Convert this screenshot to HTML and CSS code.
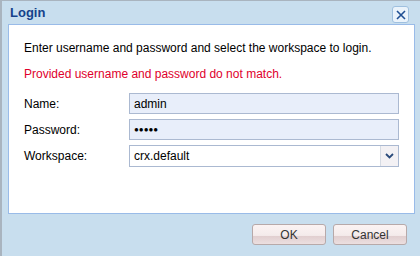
FILE: index.html
```html
<!DOCTYPE html>
<html>
<head>
<meta charset="utf-8">
<link rel="stylesheet" href="styles.css">
</head>
<body>
<div class="window">
  <div class="header">
    <span class="title">Login</span>
    <span class="close">
      <svg width="12" height="12" viewBox="0 0 12 12"><path d="M2 2 L10 10 M10 2 L2 10" stroke="#1f4f94" stroke-width="1.6" fill="none"/></svg>
    </span>
  </div>
  <div class="panel">
    <p class="intro">Enter username and password and select the workspace to login.</p>
    <p class="error">Provided username and password do not match.</p>
    <div class="form">
      <label class="lbl">Name:</label>
      <div class="field">admin</div>
      <label class="lbl">Password:</label>
      <div class="field pw">●●●●●</div>
      <label class="lbl">Workspace:</label>
      <div class="select"><span class="val">crx.default</span><span class="arrow"><svg width="9" height="6" viewBox="0 0 9 6"><path d="M1 1 L4.5 4.5 L8 1" stroke="#2a4a7a" stroke-width="1.8" fill="none"/></svg></span></div>
    </div>
  </div>
  <div class="footer">
    <button class="btn">OK</button>
    <button class="btn">Cancel</button>
  </div>
</div>
</body>
</html>
```
FILE: styles.css
```css
html, body { margin: 0; padding: 0; }
body {
  width: 420px; height: 256px; overflow: hidden;
  background: #c8deee;
  font-family: "Liberation Sans", Arial, sans-serif;
  font-size: 12px;
}
.window {
  box-sizing: border-box;
  height: 256px;
  border-left: 2px solid #a9b4bf;
  border-top: 1px solid #a9b4bf;
  padding: 0 5px 0 6px;
  display: flex; flex-direction: column;
}
.header {
  height: 23px;
  display: flex; align-items: center; justify-content: space-between;
  padding-left: 2px;
}
.title { font-weight: bold; color: #15428b; font-size: 13px; }
.close {
  width: 17px; height: 17px; box-sizing: border-box;
  border: 1px solid #9fc0df; border-radius: 3px; background: #eaf3fb;
  display: flex; align-items: center; justify-content: center;
  margin-right: 6px; margin-top: 4px;
}
.panel {
  background: #fff;
  border: 1px solid #99bbe8;
  height: 190px; box-sizing: border-box;
  padding: 16px 14px 0 15px;
}
.panel p { margin: 0; }
.intro { color: #000; }
.error { color: #e0002c; margin-top: 12px !important; }
.form {
  display: grid;
  grid-template-columns: 105px 270px;
  row-gap: 5px;
  margin-top: 12px;
  align-items: center;
}
.lbl { color: #000; }
.field {
  height: 21px; box-sizing: border-box;
  background: #e8eefa;
  border: 1px solid #abb9d1;
  padding: 3px 4px 0;
  color: #000;
}
.field.pw { font-size: 8px; letter-spacing: 0; padding-top: 5px; }
.select {
  height: 22px; box-sizing: border-box;
  background: #fff; border: 1px solid #abb9d1;
  display: flex; align-items: stretch;
}
.select .val { flex: 1; padding: 3px 4px 0; }
.arrow {
  width: 17px; border-left: 1px solid #d6dbe3; background: #f3f1f4;
  display: flex; align-items: center; justify-content: center;
}
.footer {
  display: flex; justify-content: flex-end; gap: 7px;
  padding: 10px 8px 0 0;
}
.btn {
  width: 74px; height: 21px;
  border: 1px solid #b7a9a9; border-radius: 3px;
  background: linear-gradient(#fbf3f3 0%, #f4ebeb 55%, #e1cfd0 60%, #ecdfe0 100%);
  font-family: "Liberation Sans", Arial, sans-serif; font-size: 12px; color: #333;
  padding: 0;
}
```
